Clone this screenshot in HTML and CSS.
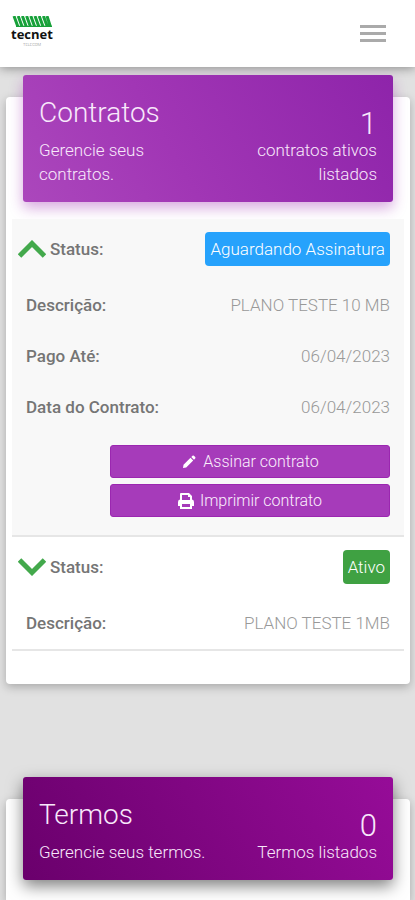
FILE: index.html
```html
<!DOCTYPE html>
<html lang="pt-BR">
<head>
<meta charset="utf-8">
<meta name="viewport" content="width=device-width, initial-scale=1">
<title>Contratos</title>
<link rel="stylesheet" href="styles.css">
</head>
<body>
<header class="topbar">
  <a class="logo" href="#" aria-label="tecnet telecom">
    <svg class="logo-mark" viewBox="0 0 40 11" aria-hidden="true">
      <g fill="none" stroke="#18a13a" stroke-width="3">
        <path d="M2 0l4 11M6.200 0l4 11M10.400 0l4 11M14.600 0l4 11M18.800 0l4 11M23 0l4 11M27.200 0l4 11M31.400 0l4 11M35 0l3.500 11"/>
        <path d="M4 10.300h36" stroke-width="1.300"/>
      </g>
    </svg>
    <span class="logo-name">tecnet</span>
    <span class="logo-tag">TELECOM</span>
  </a>
  <button class="menu" type="button" aria-label="Menu"><span></span><span></span><span></span></button>
</header>
<main class="page">
  <section class="card">
    <header class="banner banner-light">
      <div>
        <h2>Contratos</h2>
        <p>Gerencie seus contratos.</p>
      </div>
      <div class="total">
        <strong>1</strong>
        <p>contratos ativos listados</p>
      </div>
    </header>
    <article class="contract open">
      <dl>
        <div class="row status">
          <dt><button class="toggle" type="button" aria-label="Recolher"><svg viewBox="0 0 28 18" aria-hidden="true"><path d="M1.500 16L14 3.500 26.500 16"/></svg></button>Status:</dt>
          <dd><span class="badge info">Aguardando Assinatura</span></dd>
        </div>
        <div class="row"><dt>Descrição:</dt><dd>PLANO TESTE 10 MB</dd></div>
        <div class="row"><dt>Pago Até:</dt><dd>06/04/2023</dd></div>
        <div class="row"><dt>Data do Contrato:</dt><dd>06/04/2023</dd></div>
      </dl>
      <div class="actions">
        <button class="action" type="button">
          <svg viewBox="0 0 16 16" aria-hidden="true"><path d="M2 14l.5-3.200 7-7 2.700 2.700-7 7zM10.300 3l1.200-1.200q.7-.6 1.400 0l1.300 1.300q.6.700 0 1.400L13 5.700z"/></svg>
          Assinar contrato
        </button>
        <button class="action" type="button">
          <svg viewBox="0 0 16 16" aria-hidden="true"><path fill-rule="evenodd" d="M3 0h8l3 3v3.500q2 .3 2 2.500v4h-2v3H2v-3H0V9q0-2.200 2-2.500V1q0-1 1-1zM4 2v5h8V4h-2V2zM4 11v3h8v-3z"/></svg>
          Imprimir contrato
        </button>
      </div>
    </article>
    <article class="contract">
      <dl>
        <div class="row status">
          <dt><button class="toggle" type="button" aria-label="Expandir"><svg viewBox="0 0 28 18" aria-hidden="true"><path d="M1.500 2L14 14.500 26.500 2"/></svg></button>Status:</dt>
          <dd><span class="badge success">Ativo</span></dd>
        </div>
        <div class="row"><dt>Descrição:</dt><dd>PLANO TESTE 1MB</dd></div>
      </dl>
    </article>
  </section>
  <section class="card card-last">
    <header class="banner banner-dark">
      <div>
        <h2>Termos</h2>
        <p>Gerencie seus termos.</p>
      </div>
      <div class="total">
        <strong>0</strong>
        <p>Termos listados</p>
      </div>
    </header>
  </section>
</main>
</body>
</html>
```
FILE: styles.css
```css
* { box-sizing: border-box; }

body {
  display: flex;
  flex-direction: column;
  min-height: 100vh;
  margin: 0;
  background: #e1e1e1;
  font: 300 17px/24px Roboto, sans-serif;
}

h2, p, dl, dd { margin: 0; }

button {
  border: 0;
  font: inherit;
  cursor: pointer;
}

.topbar {
  display: flex;
  align-items: center;
  justify-content: space-between;
  height: 67px;
  padding: 0 29px 0 11px;
  background: #fff;
  box-shadow: 0 1px 10px rgba(0, 0, 0, .4);
}

.logo {
  display: flex;
  flex-direction: column;
  align-items: center;
  width: 42px;
  margin-bottom: 4px;
  color: #111;
  text-decoration: none;
}

.logo-mark { width: 40px; height: 11px; }
.logo-name { font: 700 13px/15px "Open Sans", sans-serif; }
.logo-tag { color: #888; font-size: 4px; line-height: 6px; }

.menu {
  display: grid;
  gap: 4px;
  padding: 0;
  background: none;
}

.menu span {
  width: 26px;
  height: 3px;
  background: #aaa;
}

.page {
  display: flex;
  flex: 1;
  flex-direction: column;
  gap: 115px;
  padding: 30px 5px 0 6px;
}

.card {
  padding: 0 6px 33px;
  border-radius: 4px;
  background: #fff;
  box-shadow: 0 3px 10px rgba(0, 0, 0, .25);
}

.card-last {
  flex: 1;
  padding-bottom: 0;
  border-radius: 4px 4px 0 0;
}

.banner {
  display: flex;
  justify-content: space-between;
  margin: -22px 11px 17px;
  padding: 21px 16px 16px;
  border-radius: 3px;
  color: #f8e8fb;
}

.banner > div { flex: 1; }

.banner-light {
  background: linear-gradient(60deg, #ab47bc, #a136b5 40%, #8e24aa);
  box-shadow: 0 6px 14px rgba(156, 39, 176, .4);
}

.banner-dark {
  background: linear-gradient(60deg, #6a006c, #960c98);
  box-shadow: 0 6px 16px rgba(0, 0, 0, .5);
}

.banner h2 {
  margin-bottom: 8px;
  font-size: 28px;
  font-weight: 300;
  line-height: 34px;
}

.banner .total {
  padding-top: 14px;
  text-align: right;
}

.total strong {
  display: block;
  font-size: 31px;
  font-weight: 300;
  line-height: 28px;
}

.contract {
  padding-bottom: 1px;
  border-bottom: 2px solid #e6e6e6;
}

.contract.open {
  padding-bottom: 18px;
  background: #f8f8f8;
}

.row {
  display: flex;
  align-items: center;
  justify-content: space-between;
  height: 51px;
  padding: 0 14px;
}

.row.status {
  height: 60px;
  padding-left: 6px;
}

dt {
  display: flex;
  align-items: center;
  gap: 4px;
  color: #757575;
  font-weight: 500;
}

dd { color: #999; }

.toggle {
  display: flex;
  padding: 0;
  background: none;
}

.toggle svg {
  width: 28px;
  height: 18px;
  fill: none;
  stroke: #43a94c;
  stroke-width: 5;
}

.badge {
  display: block;
  padding: 5px;
  border-radius: 4px;
  color: #fff;
}

.info { background: #26a2fc; }
.success { background: #3fa142; }

.actions {
  display: grid;
  gap: 6px;
  padding: 13px 14px 0 25%;
}

.action {
  display: flex;
  align-items: center;
  justify-content: center;
  gap: 6px;
  height: 33px;
  border: 1px solid #9b27b0;
  border-radius: 3px;
  background: #a63bba;
  color: #fbeffd;
  font-size: 16px;
}

.action svg {
  width: 16px;
  height: 16px;
  fill: #fff;
}
```
